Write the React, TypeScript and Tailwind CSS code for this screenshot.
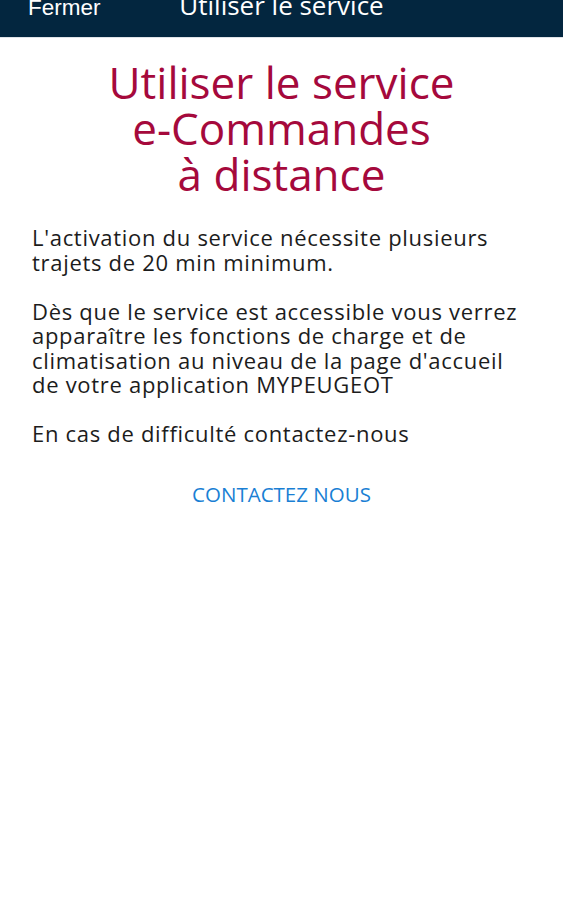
import React from 'react';

const paragraphs = [
  "L'activation du service nécessite plusieurs trajets de 20 min minimum.",
  "Dès que le service est accessible vous verrez apparaître les fonctions de charge et de climatisation au niveau de la page d'accueil de votre application MYPEUGEOT",
  'En cas de difficulté contactez-nous',
];

const App: React.FC = () => {
  return (
    <div className="min-h-screen bg-white font-['Open_Sans',sans-serif]">
      <header className="h-[38px] overflow-hidden bg-[#03263f] border-b border-[#dfe3e8] grid grid-cols-[1fr_auto_1fr] items-start">
        <button className="-mt-[6px] justify-self-start pl-[28px] text-white text-[22.5px] leading-[28px] font-['Liberation_Sans',sans-serif]">
          Fermer
        </button>
        <h1 className="-mt-[9px] text-white text-[26px] leading-[28px] whitespace-nowrap">Utiliser le service</h1>
        <div />
      </header>

      <main className="px-[32px]">
        <h2 className="mt-[21px] text-center text-[#a5093c] text-[44px] leading-[46px]">
          Utiliser le service
          <br />
          e-Commandes
          <br />à distance
        </h2>

        <div className="mt-[28px] flex flex-col gap-[24.5px] text-[#1c1c1c] text-[22px] leading-[24.5px] tracking-[0.7px]">
          {paragraphs.map(p => (
            <p key={p}>{p}</p>
          ))}
        </div>

        <div className="mt-[36px] text-center">
          <button className="text-[#1a7fd4] text-[20.5px] leading-[24px] uppercase">Contactez nous</button>
        </div>
      </main>
    </div>
  );
};

export default App;
